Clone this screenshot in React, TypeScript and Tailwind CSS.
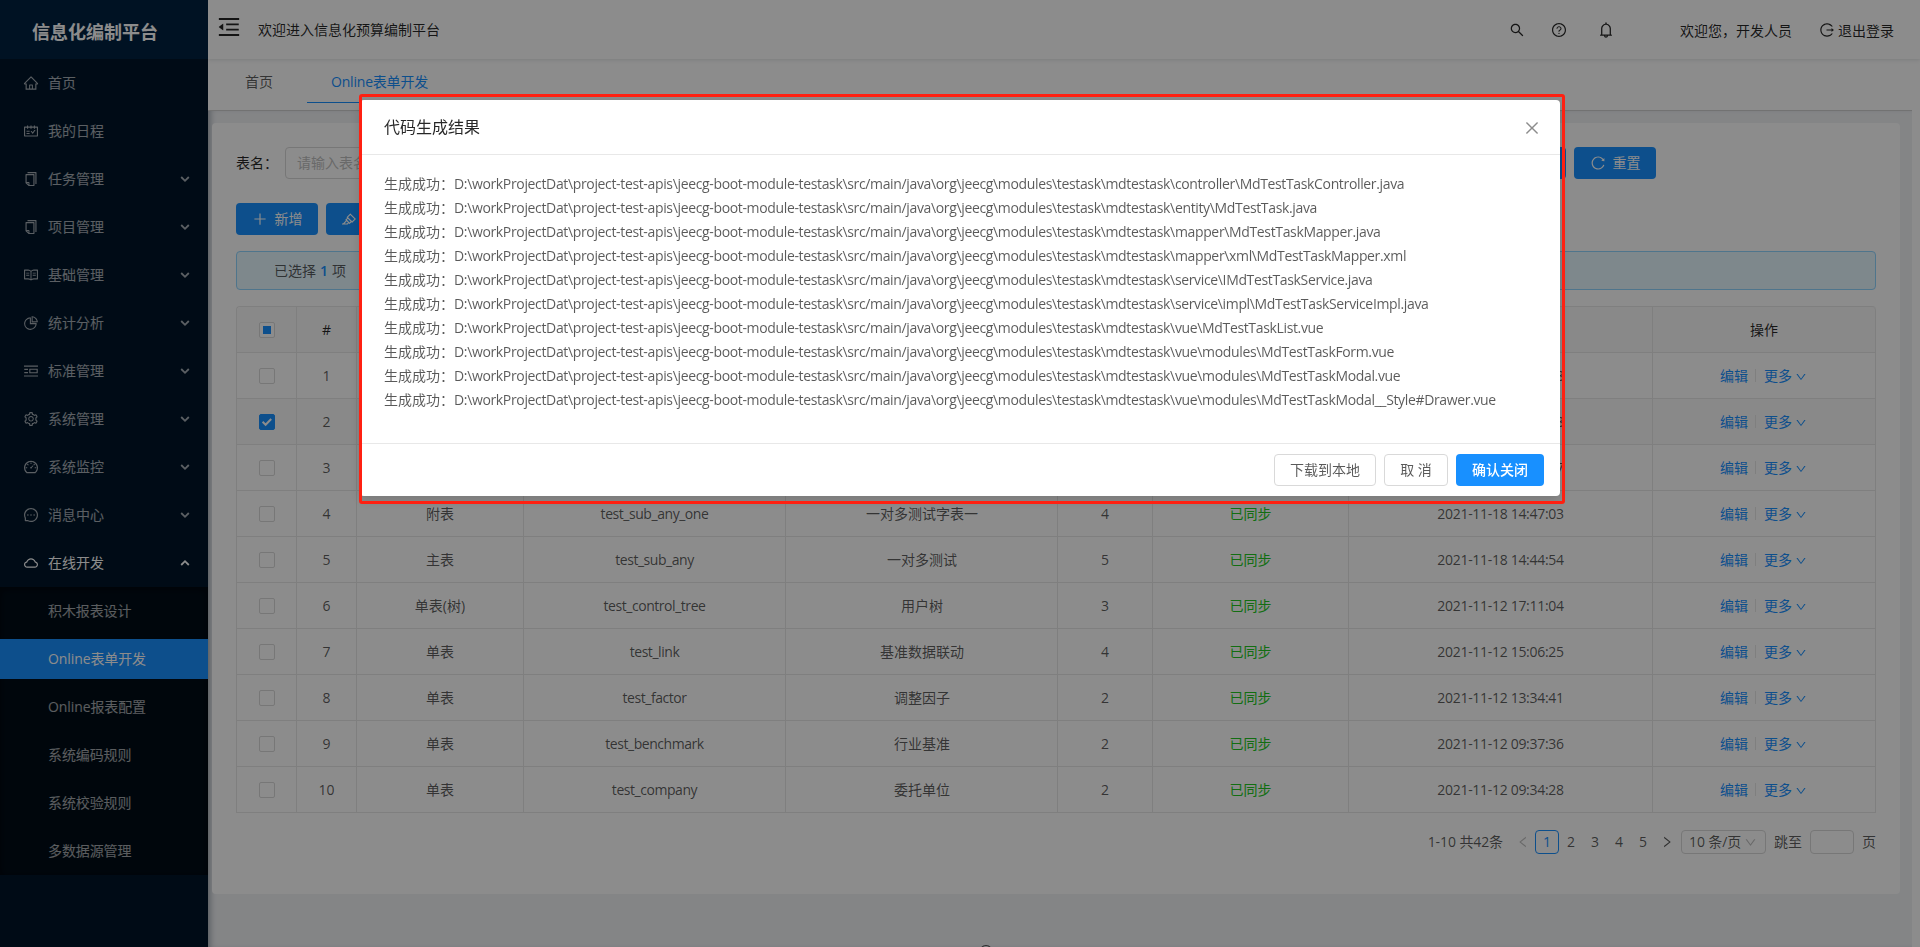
import React from 'react';
import type { IconType } from 'react-icons';
import {
  AiOutlineBell,
  AiOutlineClose,
  AiOutlineCloud,
  AiOutlineCopy,
  AiOutlineCopyright,
  AiOutlineDashboard,
  AiOutlineDown,
  AiOutlineHighlight,
  AiOutlineHome,
  AiOutlineLeft,
  AiOutlineLogout,
  AiOutlineMenuFold,
  AiOutlineMessage,
  AiOutlinePicRight,
  AiOutlinePieChart,
  AiOutlinePlus,
  AiOutlineQuestionCircle,
  AiOutlineRead,
  AiOutlineReload,
  AiOutlineRight,
  AiOutlineSchedule,
  AiOutlineSearch,
  AiOutlineSetting,
} from 'react-icons/ai';

interface MenuItem {
  label: string;
  icon: IconType;
  children?: string[];
  leaf?: boolean;
}

interface TableRow {
  type: string;
  name: string;
  desc: string;
  version: number;
  time: string;
  checked?: boolean;
}

const menu: MenuItem[] = [
  { label: '首页', icon: AiOutlineHome, leaf: true },
  { label: '我的日程', icon: AiOutlineSchedule, leaf: true },
  { label: '任务管理', icon: AiOutlineCopy },
  { label: '项目管理', icon: AiOutlineCopy },
  { label: '基础管理', icon: AiOutlineRead },
  { label: '统计分析', icon: AiOutlinePieChart },
  { label: '标准管理', icon: AiOutlinePicRight },
  { label: '系统管理', icon: AiOutlineSetting },
  { label: '系统监控', icon: AiOutlineDashboard },
  { label: '消息中心', icon: AiOutlineMessage },
  {
    label: '在线开发',
    icon: AiOutlineCloud,
    children: ['积木报表设计', 'Online表单开发', 'Online报表配置', '系统编码规则', '系统校验规则', '多数据源管理'],
  },
];

const rows: TableRow[] = [
  { type: '单表', name: 'md_test_task', desc: '测试任务', version: 3, time: '2021-11-25 10:21:08' },
  { type: '单表', name: 'md_test_plan', desc: '测试计划', version: 2, time: '2021-11-24 16:32:38', checked: true },
  { type: '附表', name: 'test_sub_any_two', desc: '一对多测试字表二', version: 4, time: '2021-11-18 14:49:27' },
  { type: '附表', name: 'test_sub_any_one', desc: '一对多测试字表一', version: 4, time: '2021-11-18 14:47:03' },
  { type: '主表', name: 'test_sub_any', desc: '一对多测试', version: 5, time: '2021-11-18 14:44:54' },
  { type: '单表(树)', name: 'test_control_tree', desc: '用户树', version: 3, time: '2021-11-12 17:11:04' },
  { type: '单表', name: 'test_link', desc: '基准数据联动', version: 4, time: '2021-11-12 15:06:25' },
  { type: '单表', name: 'test_factor', desc: '调整因子', version: 2, time: '2021-11-12 13:34:41' },
  { type: '单表', name: 'test_benchmark', desc: '行业基准', version: 2, time: '2021-11-12 09:37:36' },
  { type: '单表', name: 'test_company', desc: '委托单位', version: 2, time: '2021-11-12 09:34:28' },
];

const basePath = 'D:\\workProjectDat\\project-test-apis\\jeecg-boot-module-testask\\src/main/java\\org\\jeecg\\modules\\testask\\mdtestask\\';

const generatedFiles = [
  'controller\\MdTestTaskController.java',
  'entity\\MdTestTask.java',
  'mapper\\MdTestTaskMapper.java',
  'mapper\\xml\\MdTestTaskMapper.xml',
  'service\\IMdTestTaskService.java',
  'service\\impl\\MdTestTaskServiceImpl.java',
  'vue\\MdTestTaskList.vue',
  'vue\\modules\\MdTestTaskForm.vue',
  'vue\\modules\\MdTestTaskModal.vue',
  'vue\\modules\\MdTestTaskModal__Style#Drawer.vue',
];

const gridCols = 'grid grid-cols-[60px_60px_167px_262px_272px_95px_196px_304px_223px]';

const MenuArrow: React.FC<{ open?: boolean }> = ({ open }) => (
  <svg viewBox="0 0 10 8" className={`w-[10px] h-2 ${open ? 'rotate-180' : ''}`} fill="none" stroke="currentColor" strokeWidth="1.8">
    <path d="M1.2 2l3.8 3.8L8.8 2" />
  </svg>
);

const Sidebar: React.FC = () => (
  <aside className="w-52 h-full shrink-0 bg-[#001529] text-white/65 shadow-[2px_0_6px_rgba(0,21,41,0.35)]">
    <div className="h-[59px] pl-8 pt-[4px] flex items-center bg-[#002140] text-white text-lg font-bold">信息化编制平台</div>
    {menu.map(({ label, icon: Icon, children, leaf }) => (
      <div key={label}>
        <div className={`h-12 pl-[23px] pr-[18px] flex items-center ${children ? 'text-white' : ''}`}>
          <Icon size={16} className="mr-[9px]" />
          <span className="flex-1">{label}</span>
          {!leaf && <MenuArrow open={!!children} />}
        </div>
        {children && (
          <div className="bg-[#000c17] shadow-[inset_0_2px_8px_rgba(0,0,0,0.45)] flex flex-col gap-2 py-1">
            {children.map((child, i) => (
              <div key={child} className={`h-10 pl-12 flex items-center ${i === 1 ? 'bg-[#1890ff] text-white' : ''}`}>
                <span className="tracking-[-0.1px]">{child}</span>
              </div>
            ))}
          </div>
        )}
      </div>
    ))}
  </aside>
);

const Header: React.FC = () => (
  <header className="relative z-20 h-[59px] shrink-0 bg-white shadow-[0_1px_4px_rgba(0,21,41,0.12)] flex items-center text-black/85">
    <AiOutlineMenuFold size={26} className="ml-2 -mt-[5px]" />
    <span className="ml-4">欢迎进入信息化预算编制平台</span>
    <div className="ml-auto mr-[26px] flex items-center pt-[3px]">
      <AiOutlineSearch size={16} className="-mt-[3px]" />
      <AiOutlineQuestionCircle size={16} className="ml-[26px] -mt-[3px]" />
      <AiOutlineBell size={18} className="ml-[30px] -mt-[3px]" />
      <span className="ml-[65px]">欢迎您，开发人员</span>
      <AiOutlineLogout size={16} className="ml-[27px] mr-[3px] -mt-[3px]" />
      <span>退出登录</span>
    </div>
  </header>
);

const TabBar: React.FC = () => (
  <div className="relative z-10 mr-2 h-[52px] shrink-0 bg-white border-b border-[#d0d0d0] flex text-black/65">
    <div className="h-[44px] w-[99px] pl-[37px] flex items-center">
      <span className="pt-px">首页</span>
    </div>
    <div className="h-[44px] pl-6 pr-6 flex items-center text-[#1890ff] border-b border-[#1890ff]">
      <span className="pt-[2px] tracking-[-0.2px]">Online表单开发</span>
    </div>
  </div>
);

const Checkbox: React.FC<{ state?: 'on' | 'half' }> = ({ state }) => (
  <span className={`w-4 h-4 rounded-[2px] border flex items-center justify-center ${state === 'on' ? 'bg-[#1890ff] border-[#1890ff]' : 'bg-white border-[#d9d9d9]'}`}>
    {state === 'half' && <span className="w-2 h-2 bg-[#1890ff]" />}
    {state === 'on' && (
      <svg viewBox="0 0 12 12" className="w-3 h-3" fill="none" stroke="#fff" strokeWidth="2">
        <path d="M1.6 5.8l3 3L10.2 3" />
      </svg>
    )}
  </span>
);

const Cell: React.FC<{ children?: React.ReactNode; className?: string }> = ({ children, className = '' }) => (
  <div className={`border-r border-b border-[#e8e8e8] flex items-center justify-center ${className}`}>{children}</div>
);

const DataTable: React.FC = () => (
  <div className="mt-4 border-l border-t border-[#e8e8e8] rounded-t">
    <div className={`${gridCols} h-[46px] bg-[#fafafa] text-black/85 rounded-t`}>
      <Cell><Checkbox state="half" /></Cell>
      <Cell>#</Cell>
      <Cell>表类型</Cell>
      <Cell>表名</Cell>
      <Cell>表描述</Cell>
      <Cell>版本</Cell>
      <Cell>同步数据库状态</Cell>
      <Cell>创建时间</Cell>
      <Cell className="rounded-tr">操作</Cell>
    </div>
    {rows.map((row, i) => (
      <div key={row.name} className={`${gridCols} h-[46px] ${row.checked ? 'bg-[#fafafa]' : ''}`}>
        <Cell><Checkbox state={row.checked ? 'on' : undefined} /></Cell>
        <Cell>{i + 1}</Cell>
        <Cell>{row.type}</Cell>
        <Cell><span className="tracking-[-0.45px]">{row.name}</span></Cell>
        <Cell><span className="pl-px">{row.desc}</span></Cell>
        <Cell>{row.version}</Cell>
        <Cell className="text-[#21c921]">已同步</Cell>
        <Cell><span className="tracking-[-0.3px]">{row.time}</span></Cell>
        <Cell className="text-[#1890ff]">
          <span>编辑</span>
          <span className="ml-[7px] mr-2 w-px h-[13px] bg-[#e8e8e8]" />
          <span>更多</span>
          <AiOutlineDown size={12} className="ml-[3px] mr-px mt-[2px]" />
        </Cell>
      </div>
    ))}
  </div>
);

const Pagination: React.FC = () => (
  <div className="mt-[17px] h-6 flex items-center justify-end">
    <span className="mr-2 tracking-[-0.1px]">1-10 共42条</span>
    <span className="w-6 flex justify-center text-black/25"><AiOutlineLeft size={14} /></span>
    <span className="w-6 h-6 flex items-center justify-center rounded border border-[#1890ff] text-[#1890ff]">1</span>
    {[2, 3, 4, 5].map((n) => (
      <span key={n} className="w-6 text-center">{n}</span>
    ))}
    <span className="w-6 flex justify-center"><AiOutlineRight size={14} /></span>
    <span className="ml-[2px] w-[85px] h-6 pl-[7px] pr-2 flex items-center justify-between rounded border border-[#d9d9d9] tracking-[-0.1px]">
      10 条/页
      <AiOutlineDown size={13} className="text-black/25" />
    </span>
    <span className="ml-2">跳至</span>
    <span className="mx-2 w-11 h-6 rounded border border-[#d9d9d9]" />
    <span>页</span>
  </div>
);

const PrimaryButton: React.FC<{ icon: IconType; label: string }> = ({ icon: Icon, label }) => (
  <button className="w-[82px] h-8 rounded bg-[#1890ff] text-white flex items-center justify-center gap-[7px]">
    <Icon size={16} />
    {label}
  </button>
);

const ResultModal: React.FC = () => (
  <div className="fixed inset-0 z-50 bg-black/45">
    <div className="relative mx-auto mt-[100px] w-[1200px] h-[396px] bg-white rounded shadow-[0_4px_12px_rgba(0,0,0,0.15)] flex flex-col">
      <div className="h-[55px] px-6 flex items-center justify-between border-b border-[#e8e8e8]">
        <span className="text-base text-black/85">代码生成结果</span>
        <AiOutlineClose size={18} className="-mr-[5px] mt-px text-black/45" />
      </div>
      <div className="flex-1 px-6 pt-[17px]">
        {generatedFiles.map((file) => (
          <p key={file} className="h-6 leading-6 whitespace-nowrap">
            生成成功：<span className="tracking-[-0.35px]">{basePath + file}</span>
          </p>
        ))}
      </div>
      <div className="h-[53px] px-4 flex items-center justify-end gap-2 border-t border-[#e8e8e8]">
        <button className="w-[102px] h-8 rounded border border-[#d9d9d9]">下载到本地</button>
        <button className="w-16 h-8 rounded border border-[#d9d9d9]">取 消</button>
        <button className="w-[88px] h-8 rounded bg-[#1890ff] text-white font-medium">确认关闭</button>
      </div>
      {/* Highlight frame around the dialog */}
      <div className="absolute -top-[6px] -left-px w-[1206px] h-[410px] rounded-[3px] border-[3px] border-[#ff2011]" />
    </div>
  </div>
);

const App: React.FC = () => (
  <div className='h-[947px] flex overflow-hidden bg-white text-sm text-black/65 font-["Open_Sans","Noto_Sans_CJK_SC",sans-serif]'>
    <Sidebar />
    <div className="flex-1 h-full overflow-hidden flex flex-col">
      <Header />
      <TabBar />
      <main className="mr-2 flex-1 min-h-0 overflow-hidden bg-[#f0f2f5] pl-1 pr-3 pt-3 shadow-[inset_6px_0_6px_-4px_rgba(0,21,41,0.35)]">
        <section className="h-[771px] rounded-sm bg-white p-6">
          <div className="h-8 flex items-center">
            <span className="text-black/85 w-[49px]">表名：</span>
            <span className="w-[260px] h-8 px-[11px] flex items-center rounded border border-[#d9d9d9] text-[#bfbfbf]">请输入表名</span>
            <div className="ml-auto mr-[220px] flex gap-2">
              <PrimaryButton icon={AiOutlineSearch} label="查询" />
              <PrimaryButton icon={AiOutlineReload} label="重置" />
            </div>
          </div>
          <div className="mt-6 flex gap-2">
            <PrimaryButton icon={AiOutlinePlus} label="新增" />
            <button className="w-[138px] h-8 pl-[15px] rounded bg-[#1890ff] text-white flex items-center gap-[7px]">
              <AiOutlineHighlight size={16} />
              自定义按钮
            </button>
          </div>
          <div className="mt-4 h-[39px] pl-[37px] flex items-center rounded border border-[#91d5ff] bg-[#e6f7ff]">
            已选择<span className="mx-1 text-[#1890ff] font-semibold">1</span>项
          </div>
          <DataTable />
          <Pagination />
        </section>
        <div className="mt-[50px] flex justify-center text-black/65">
          <AiOutlineCopyright size={14} className="mr-[140px]" />
        </div>
      </main>
    </div>
    <ResultModal />
  </div>
);

export default App;
